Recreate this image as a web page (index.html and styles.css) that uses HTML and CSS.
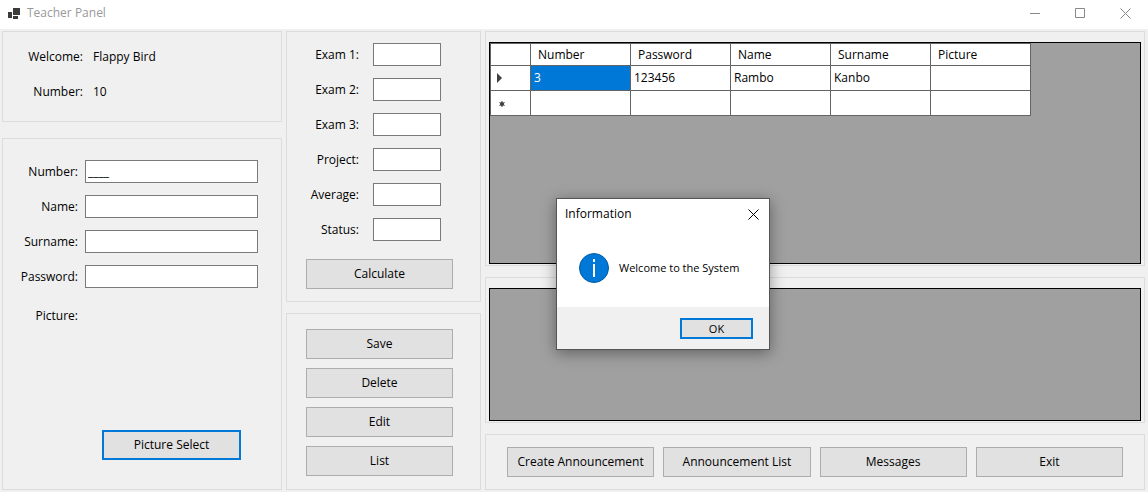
FILE: index.html
```html
<!DOCTYPE html>
<html lang="en">
<head>
<meta charset="utf-8">
<title>Teacher Panel</title>
<link rel="stylesheet" href="styles.css">
</head>
<body>
<header class="titlebar">
  <svg class="app-icon" viewBox="0 0 12 11" aria-hidden="true"><path d="M5 0h7v7H5zM0 4h4v6H0zM5 8h5v3H5z"/></svg>
  <h1 class="title">Teacher Panel</h1>
  <div class="window-controls">
    <button type="button" class="window-button" aria-label="Minimize"><svg viewBox="0 0 11 11"><path d="M0 5.5h10"/></svg></button>
    <button type="button" class="window-button" aria-label="Maximize"><svg viewBox="0 0 11 11"><path d="M.5.5h9v9h-9z"/></svg></button>
    <button type="button" class="window-button" aria-label="Close"><svg viewBox="0 0 11 11"><path d="M.5.5l10 10M10.5.5l-10 10"/></svg></button>
  </div>
</header>
<main class="workspace">
  <div class="column column-profile">
    <section class="panel">
      <dl class="profile">
        <dt>Welcome:</dt><dd>Flappy Bird</dd>
        <dt>Number:</dt><dd>10</dd>
      </dl>
    </section>
    <form class="panel panel-grow student-form">
      <div class="fields student-fields">
        <label for="number">Number:</label><input id="number" class="field" type="text" value="____">
        <label for="name">Name:</label><input id="name" class="field" type="text">
        <label for="surname">Surname:</label><input id="surname" class="field" type="text">
        <label for="password">Password:</label><input id="password" class="field" type="password">
        <span class="picture-label">Picture:</span>
      </div>
      <button type="button" class="button button-default picture-select">Picture Select</button>
    </form>
  </div>
  <div class="column column-marks">
    <form class="panel marks-form">
      <div class="fields marks-fields">
        <label for="exam1">Exam 1:</label><input id="exam1" class="field" type="text">
        <label for="exam2">Exam 2:</label><input id="exam2" class="field" type="text">
        <label for="exam3">Exam 3:</label><input id="exam3" class="field" type="text">
        <label for="project">Project:</label><input id="project" class="field" type="text">
        <label for="average">Average:</label><input id="average" class="field" type="text">
        <label for="status">Status:</label><input id="status" class="field" type="text">
      </div>
      <button type="button" class="button">Calculate</button>
    </form>
    <section class="panel panel-grow record-actions">
      <button type="button" class="button">Save</button>
      <button type="button" class="button">Delete</button>
      <button type="button" class="button">Edit</button>
      <button type="button" class="button">List</button>
    </section>
  </div>
  <div class="column column-data">
    <section class="panel grid-panel students">
      <div class="grid-view">
        <table class="grid-table">
          <thead>
            <tr><th class="row-header"></th><th>Number</th><th>Password</th><th>Name</th><th>Surname</th><th>Picture</th></tr>
          </thead>
          <tbody>
            <tr><th class="row-header"><svg class="row-mark" viewBox="0 0 9 10"><path d="M0 0l5 5-5 5z"/></svg></th><td class="selected">3</td><td>123456</td><td>Rambo</td><td>Kanbo</td><td></td></tr>
            <tr><th class="row-header"><svg class="row-mark" viewBox="0 0 9 10"><circle cx="5" cy="6" r="2"/><path class="star" d="M5 3v6M2.400 4.500l5.200 3M7.600 4.500l-5.200 3"/></svg></th><td></td><td></td><td></td><td></td><td></td></tr>
          </tbody>
        </table>
      </div>
    </section>
    <section class="panel grid-panel announcements">
      <div class="grid-view"></div>
    </section>
    <nav class="panel navigation">
      <button type="button" class="button">Create Announcement</button>
      <button type="button" class="button">Announcement List</button>
      <button type="button" class="button">Messages</button>
      <button type="button" class="button">Exit</button>
    </nav>
  </div>
</main>
<div class="message-box" role="dialog" aria-labelledby="message-title">
  <div class="message-header">
    <h2 id="message-title" class="message-title">Information</h2>
    <button type="button" class="message-close" aria-label="Close"><svg viewBox="0 0 11 11"><path d="M.5.5l10 10M10.500.5l-10 10"/></svg></button>
  </div>
  <div class="message-body">
    <svg class="info-icon" viewBox="0 0 30 30" aria-hidden="true"><circle cx="15" cy="15" r="14.500"/><path d="M14 6h2v3h-2zM14 11h2v13h-2z"/></svg>
    <p class="message-text">Welcome to the System</p>
  </div>
  <div class="message-footer"><button type="button" class="button button-default message-ok">OK</button></div>
</div>
</body>
</html>
```
FILE: styles.css
```css
* { box-sizing: border-box; }

body {
  margin: 0;
  min-height: 100vh;
  display: flex;
  flex-direction: column;
  background: #f0f0f0;
  color: #000;
  font: 12px/16px "Open Sans", "Noto Sans", sans-serif;
}

h1, h2, p, dl, dd { margin: 0; font-size: inherit; font-weight: normal; }
button, input { font: inherit; color: inherit; }

.titlebar {
  display: flex;
  align-items: center;
  height: 29px;
  padding-left: 8px;
  padding-bottom: 3px;
  background: #fff;
  color: #999;
}
.app-icon { width: 12px; height: 11px; margin-right: 7px; fill: #3c3c3c; }
.window-controls { display: flex; margin-left: auto; }
.window-button { width: 45px; height: 26px; padding: 0; border: 0; background: none; }
.window-button svg, .message-close svg { display: block; width: 11px; height: 11px; margin: auto; fill: none; stroke: #888; }

.workspace {
  flex: 1;
  display: grid;
  grid-template-columns: 280px 195px 1fr;
  gap: 4px;
  padding: 2px 3px 2px 2px;
}
.column { display: flex; flex-direction: column; }
.column-profile { gap: 16px; }
.column-marks { gap: 11px; }
.column-data { gap: 11px; }
.panel { border: 1px solid #dcdcdc; }
.panel-grow { flex: 1; }

.profile { display: grid; grid-template-columns: 80px 1fr; gap: 19px 10px; padding: 17px 0 21px; }
.profile dt { text-align: right; }

.fields { display: grid; align-items: center; gap: 12px 7px; text-align: right; }
.field {
  width: 100%;
  height: 23px;
  min-width: 0;
  padding: 0 2px;
  border: 1px solid #7a7a7a;
  border-radius: 0;
  background: #fff;
  outline: 0;
}
.student-form { display: flex; flex-direction: column; padding: 21px 23px 29px 0; }
.student-fields { grid-template-columns: 75px 1fr; }
.picture-label { padding-top: 8px; }
.picture-select { width: 139px; margin: auto 17px 0 auto; }

.marks-form { padding: 11px 27px 12px 19px; }
.marks-fields { grid-template-columns: 1fr 68px; column-gap: 14px; margin: 0 12px 18px 0; }

.button {
  height: 30px;
  padding: 0 4px;
  border: 1px solid #adadad;
  border-radius: 0;
  background: #e1e1e1;
}
.button-default { border: 2px solid #0078d7; }
.marks-form .button { width: 100%; }
.record-actions { display: flex; flex-direction: column; gap: 9px; padding: 15px 27px 12px 19px; }

.grid-panel { display: flex; padding: 10px 3px 1px; }
.students { flex: 5 1 0; }
.announcements { flex: 3 1 0; }
.grid-view { flex: 1; border: 1px solid #000; background: #a0a0a0; }
.grid-table { table-layout: fixed; width: 541px; border-collapse: collapse; background: #fff; }
.grid-table th, .grid-table td {
  height: 25px;
  padding: 0 3px;
  border: 1px solid #646464;
  font-weight: normal;
  text-align: left;
}
.grid-table thead th { height: 22px; padding-left: 7px; }
.grid-table .row-header { width: 40px; padding-left: 6px; }
.grid-table .selected { background: #0078d7; color: #fff; }
.row-mark { display: block; width: 9px; height: 10px; fill: #404040; }
.row-mark .star { stroke: #404040; stroke-width: 1; }

.navigation { display: flex; gap: 9px; padding: 12px 21px; }
.navigation .button { flex: 1 1 0; }

.message-box {
  position: absolute;
  left: 556px;
  top: 198px;
  width: 214px;
  border: 1px solid #555;
  background: #fff;
  box-shadow: 0 3px 14px rgba(0, 0, 0, .4);
}
.message-header { display: flex; align-items: center; justify-content: space-between; padding: 7px 10px 0 8px; }
.message-close { padding: 0; border: 0; background: none; }
.message-close svg { stroke: #000; }
.message-body { display: flex; align-items: center; gap: 10px; padding: 31px 22px 24px; }
.info-icon { flex: none; width: 30px; height: 30px; fill: #0078d7; stroke: #005a9e; }
.info-icon path { fill: #fff; stroke: none; }
.message-text { font-size: 11px; white-space: nowrap; }
.message-footer { display: flex; justify-content: flex-end; padding: 11px 16px 10px; background: #f0f0f0; }
.message-ok { width: 73px; height: 21px; font-size: 11px; line-height: 16px; }
```
